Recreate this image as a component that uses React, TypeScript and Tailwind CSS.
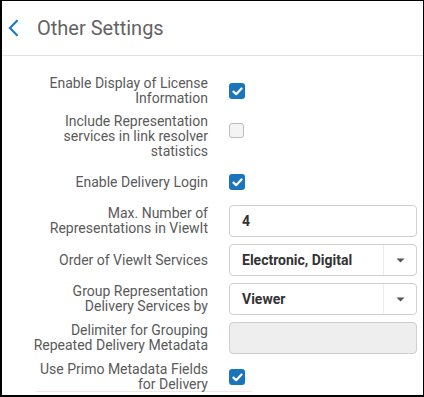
import React from "react";

const labelCls =
  "w-[176px] ml-[30px] min-h-[32px] flex items-center justify-end text-right text-[14px] leading-[15px] text-[#5a5a5a]";

function Check({ checked }: { checked: boolean }) {
  return checked ? (
    <div className="w-[16px] h-[16px] rounded-[3px] bg-[#1b75bb] flex items-center justify-center">
      <svg width="11" height="9" viewBox="0 0 11 9">
        <path d="M1.5 4.6 L4.2 7.2 L9.5 1.5" fill="none" stroke="#fff" strokeWidth="2.2" strokeLinecap="round" strokeLinejoin="round" />
      </svg>
    </div>
  ) : (
    <div className="w-[15px] h-[15px] rounded-[3px] bg-[#f4f4f4] border border-[#bcbcbc]" />
  );
}

function Row({ label, children }: { label: React.ReactNode; children: React.ReactNode }) {
  return (
    <div className="flex items-start">
      <div className={labelCls}>{label}</div>
      <div className="ml-[21px] w-[188px] h-[32px] flex items-center">{children}</div>
    </div>
  );
}

function TextBox({ value, disabled }: { value?: string; disabled?: boolean }) {
  return (
    <div
      className={
        "w-full h-[32px] rounded-[4px] border border-[#cfcfcf] flex items-center pl-[12px] text-[14px] font-bold text-[#333] " +
        (disabled ? "bg-[#eeeeee]" : "bg-white")
      }
    >
      {value}
    </div>
  );
}

function SelectBox({ value }: { value: string }) {
  return (
    <div className="w-full h-[32px] rounded-[4px] border border-[#cfcfcf] bg-white flex items-stretch text-[14px] font-bold text-[#333]">
      <div className="flex-1 flex items-center pl-[12px]">{value}</div>
      <div className="w-[33px] border-l border-[#ececec] flex items-center justify-center">
        <svg width="9" height="5" viewBox="0 0 9 5">
          <path d="M0.5 0.5 L8.5 0.5 L4.5 4.5 Z" fill="#555" />
        </svg>
      </div>
    </div>
  );
}

export default function App() {
  return (
    <div
      className="w-[424px] h-[397px] overflow-hidden bg-white border-black border-t border-r border-l-2 border-b-2"
      style={{ fontFamily: "Roboto, 'Liberation Sans', sans-serif" }}
    >
      <div className="h-[55px] border-b border-[#e2e2e2] flex items-center">
        <svg className="ml-[6px]" width="11" height="18" viewBox="0 0 11 18">
          <path d="M9.5 1.2 L2 9 L9.5 16.8" fill="none" stroke="#1f7bc1" strokeWidth="2.2" />
        </svg>
        <span className="ml-[18px] text-[20px] leading-[24px] text-[#636363]">Other Settings</span>
      </div>
      <div className="pt-[19px] flex flex-col gap-[7px]">
        <Row label={<span>Enable Display of License Information</span>}>
          <Check checked />
        </Row>
        <Row label={<span>Include Representation services in link resolver statistics</span>}>
          <Check checked={false} />
        </Row>
        <Row label={<span>Enable Delivery Login</span>}>
          <Check checked />
        </Row>
        <Row label={<span>Max. Number of Representations in ViewIt</span>}>
          <TextBox value="4" />
        </Row>
        <Row label={<span>Order of ViewIt Services</span>}>
          <SelectBox value="Electronic, Digital" />
        </Row>
        <Row label={<span>Group Representation Delivery Services by</span>}>
          <SelectBox value="Viewer" />
        </Row>
        <Row label={<span>Delimiter for Grouping Repeated Delivery Metadata</span>}>
          <TextBox disabled />
        </Row>
        <div>
          <Row label={<span>Use Primo Metadata Fields for Delivery</span>}>
            <Check checked />
          </Row>
          <div className="mt-[-2px] ml-[34px] w-[216px] h-px bg-[#f9e3e3]" />
        </div>
      </div>
    </div>
  );
}
